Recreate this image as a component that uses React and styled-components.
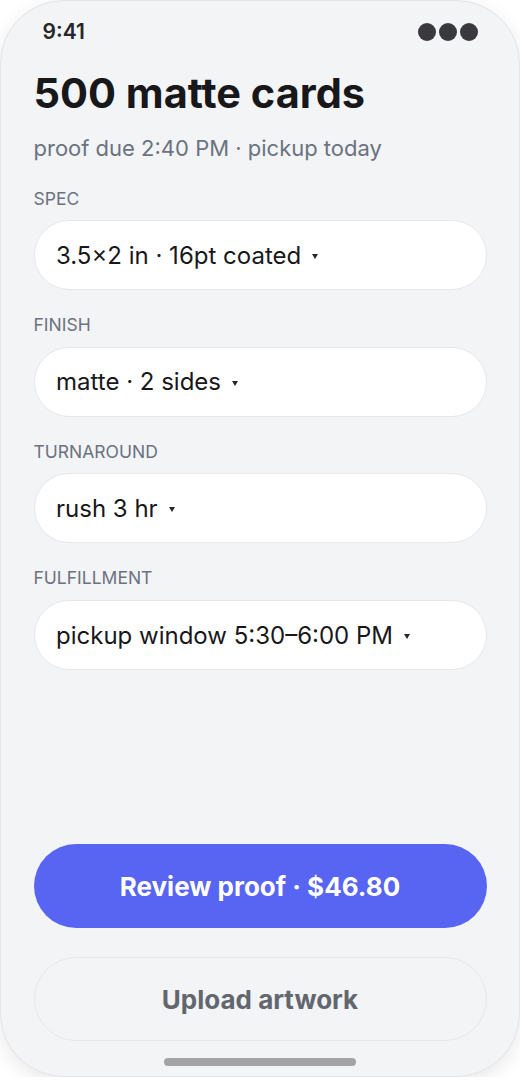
import React from "react";
import styled, { createGlobalStyle } from "styled-components";

const Global = createGlobalStyle`
  * { box-sizing: border-box; }
  html, body { margin: 0; padding: 0; background: #ffffff; }
  body { font-family: "Inter", "Noto Sans", sans-serif; -webkit-font-smoothing: antialiased; }
`;

const Phone = styled.div`
  width: 520px;
  height: 1077px;
  border: 1.5px solid #e3e4e8;
  border-radius: 64px;
  background: #f3f4f6;
  box-shadow: 0 6px 20px rgba(0, 0, 0, 0.09);
  display: flex;
  flex-direction: column;
  padding: 18.5px 32.5px 10px 32.5px;
  overflow: hidden;
`;

const StatusBar = styled.div`
  height: 24px;
  display: flex;
  align-items: center;
  justify-content: space-between;
  padding: 0 9px;
`;

const Time = styled.span`
  font-size: 21px;
  line-height: 24px;
  font-weight: 600;
  color: #27272a;
`;

const Dots = styled.div`
  display: flex;
  gap: 3px;
`;

const Dot = styled.span`
  width: 18px;
  height: 18px;
  border-radius: 50%;
  background: #3a3a3e;
`;

const Title = styled.h1`
  margin: 24px 0 0 0;
  font-size: 41.5px;
  line-height: 50px;
  font-weight: 700;
  letter-spacing: 0;
  color: #18181b;
`;

const Subtitle = styled.p`
  margin: 16px 0 0 0;
  font-size: 22px;
  line-height: 28px;
  color: #6b7280;
`;

const Fields = styled.div`
  margin-top: 27px;
  display: flex;
  flex-direction: column;
  gap: 24.8px;
`;

const Field = styled.div`
  display: flex;
  flex-direction: column;
  gap: 11.8px;
`;

const Label = styled.div`
  font-size: 17.5px;
  line-height: 20px;
  color: #6b7280;
  text-transform: uppercase;
`;

const Select = styled.div`
  height: 70px;
  border: 1.5px solid #e5e7eb;
  border-radius: 35px;
  background: #ffffff;
  display: flex;
  align-items: center;
  padding: 0 21.5px;
  font-size: 24px;
  color: #18181b;
`;

const Caret = styled.span`
  width: 0;
  height: 0;
  margin: 3px 0 0 11px;
  border-left: 3px solid transparent;
  border-right: 3px solid transparent;
  border-top: 5px solid #27272a;
`;

const Spacer = styled.div`
  flex: 1;
`;

const Button = styled.button`
  width: 100%;
  height: 84px;
  border-radius: 42px;
  font-family: inherit;
  font-size: 26px;
  font-weight: 700;
  cursor: pointer;
  border: ${(p) => (p.$primary ? "none" : "1.5px solid #e5e7eb")};
  background: ${(p) => (p.$primary ? "#5865f2" : "transparent")};
  color: ${(p) => (p.$primary ? "#ffffff" : "#61666f")};
`;

const Actions = styled.div`
  display: flex;
  flex-direction: column;
  gap: 29px;
`;

const HomeBar = styled.div`
  align-self: center;
  margin-top: 17px;
  width: 192px;
  height: 8px;
  border-radius: 4px;
  background: #a3a3a6;
`;

const fields = [
  { label: "Spec", value: "3.5×2 in · 16pt coated" },
  { label: "Finish", value: "matte · 2 sides" },
  { label: "Turnaround", value: "rush 3 hr" },
  { label: "Fulfillment", value: "pickup window 5:30–6:00 PM" },
];

export default function App() {
  return (
    <>
      <Global />
      <Phone>
        <StatusBar>
          <Time>9:41</Time>
          <Dots>
            <Dot />
            <Dot />
            <Dot />
          </Dots>
        </StatusBar>
        <Title>500 matte cards</Title>
        <Subtitle>proof due 2:40 PM · pickup today</Subtitle>
        <Fields>
          {fields.map((f) => (
            <Field key={f.label}>
              <Label>{f.label}</Label>
              <Select>
                {f.value}
                <Caret />
              </Select>
            </Field>
          ))}
        </Fields>
        <Spacer />
        <Actions>
          <Button $primary>Review proof · $46.80</Button>
          <Button>Upload artwork</Button>
        </Actions>
        <HomeBar />
      </Phone>
    </>
  );
}
